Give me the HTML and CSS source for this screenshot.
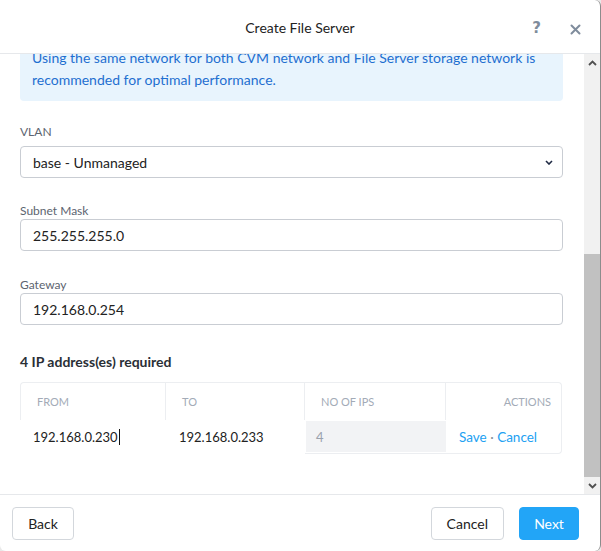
FILE: index.html
```html
<!DOCTYPE html>
<html>
<head>
<meta charset="utf-8">
<link rel="stylesheet" href="styles.css">
</head>
<body>
<div class="modal">
  <div class="header">
    <div class="title">Create File Server</div>
    <div class="hicons">
      <span class="help">?</span>
      <svg class="close" width="11" height="11" viewBox="0 0 11 11"><path d="M1.5 1.5 L9.5 9.5 M9.5 1.5 L1.5 9.5" stroke="#7f8c9c" stroke-width="2" stroke-linecap="round"/></svg>
    </div>
  </div>
  <div class="body">
    <div class="viewport">
      <div class="content">
        <div class="info">Using the same network for both CVM network and File Server storage network is recommended for optimal performance.</div>
        <div class="field first">
          <div class="label">VLAN</div>
          <div class="box select">
            <span>base - Unmanaged</span>
            <svg width="8" height="5" viewBox="0 0 8 5"><path d="M1 1 L4 4 L7 1" stroke="#1f2a44" stroke-width="1.6" fill="none"/></svg>
          </div>
        </div>
        <div class="field">
          <div class="label">Subnet Mask</div>
          <div class="box">255.255.255.0</div>
        </div>
        <div class="field last">
          <div class="label">Gateway</div>
          <div class="box">192.168.0.254</div>
        </div>
        <div class="req">4 IP address(es) required</div>
        <div class="table">
          <div class="th c1">FROM</div>
          <div class="th c2">TO</div>
          <div class="th c3">NO OF IPS</div>
          <div class="th c4">ACTIONS</div>
          <div class="td d1"><span>192.168.0.230</span><span class="caret"></span></div>
          <div class="td d2">192.168.0.233</div>
          <div class="td d3"><div class="num">4</div></div>
          <div class="td d4"><span class="actions"><span class="link">Save</span> · <span class="link">Cancel</span></span></div>
        </div>
      </div>
    </div>
    <div class="scrollbar">
      <div class="arrow"><svg width="9" height="6" viewBox="0 0 9 6"><path d="M1 5 L4.5 1.5 L8 5" stroke="#505050" stroke-width="1.8" fill="none"/></svg></div>
      <div class="track"><div class="thumb"></div></div>
      <div class="arrow"><svg width="9" height="6" viewBox="0 0 9 6"><path d="M1 1 L4.5 4.5 L8 1" stroke="#505050" stroke-width="1.8" fill="none"/></svg></div>
    </div>
  </div>
  <div class="footer">
    <div class="btn back">Back</div>
    <div class="right">
      <div class="btn">Cancel</div>
      <div class="btn primary">Next</div>
    </div>
  </div>
</div>
</body>
</html>
```

FILE: styles.css
```css
* { box-sizing: border-box; }
html, body { margin: 0; padding: 0; }
body {
  width: 601px;
  height: 551px;
  background: #e9e9e9;
  font-family: Lato, "Open Sans", sans-serif;
  color: #222;
  overflow: hidden;
}
.modal {
  width: 601px;
  height: 551px;
  background: #fff;
  border-right: 1px solid #8c8c8c;
  border-radius: 0 6px 6px 6px;
  display: flex;
  flex-direction: column;
  overflow: hidden;
}
.header {
  height: 54px;
  flex: none;
  border-bottom: 1px solid #e6e8eb;
  display: flex;
  align-items: center;
  justify-content: center;
  position: relative;
}
.title {
  font-size: 14px;
  color: #222;
  padding-top: 2px;
}
.hicons {
  position: absolute;
  right: 19px;
  top: 20px;
  display: flex;
  align-items: center;
  gap: 29px;
}
.help {
  font-family: "DejaVu Sans", sans-serif;
  font-size: 15px;
  font-weight: 700;
  color: #7f8c9c;
  line-height: 17px;
}
.close { display: block; margin-top: 1px; }
.body {
  flex: 1;
  display: flex;
  min-height: 0;
}
.viewport {
  flex: 1;
  overflow: hidden;
}
.content {
  padding: 0 21px 0 20px;
}
.info {
  margin-top: -19px;
  background: #e8f4fd;
  color: #1f6fd0;
  font-size: 14px;
  line-height: 22px;
  padding: 12px 20px 10px 12px;
  border-radius: 4px;
}
.field { margin-top: 25px; }
.field.first { margin-top: 23px; }
.field.last { margin-top: 26px; }
.label {
  font-size: 12px;
  line-height: 15px;
  color: #5c6470;
  margin-bottom: 1px;
}
.field.first .label { margin-bottom: 7px; }
.box {
  height: 32px;
  border: 1px solid #c9cdd3;
  border-radius: 4px;
  font-size: 14px;
  padding: 0 12px;
  display: flex;
  align-items: center;
}
.select {
  justify-content: space-between;
  padding-right: 9px;
}
.req {
  margin-top: 28px;
  font-size: 14px;
  font-weight: 700;
  line-height: 18px;
  color: #2a2f36;
}
.table {
  margin-top: 11px;
  display: grid;
  grid-template-columns: 146px 139px 141px 116px;
}
.th {
  height: 38px;
  font-size: 11px;
  color: #a3abb7;
  display: flex;
  align-items: center;
  padding: 0 16px;
  border-top: 1px solid #eceef1;
  border-right: 1px solid #eceef1;
}
.th.c1 { border-left: 1px solid #eceef1; border-top-left-radius: 4px; }
.th.c4 {
  justify-content: flex-end;
  padding-right: 10px;
  border-top-right-radius: 4px;
}
.td {
  height: 34px;
  font-size: 13px;
  display: flex;
  align-items: center;
}
.d1 { padding-left: 13px; }
.d2 { padding-left: 13px; }
.d3 {
  border-bottom: 1px solid #eceef1;
  padding: 1px 0 1px 1px;
  align-items: stretch;
}
.num {
  flex: 1;
  background: #f2f3f5;
  color: #9aa2ad;
  display: flex;
  align-items: center;
  padding-left: 10px;
}
.d4 {
  border-bottom: 1px solid #eceef1;
  border-right: 1px solid #eceef1;
  border-bottom-right-radius: 4px;
  padding-left: 13px;
}
.actions { color: #8a9099; white-space: pre; font-size: 13.5px; }
.link { color: #22a1f2; }
.caret {
  display: inline-block;
  width: 1px;
  height: 16px;
  background: #111;
  margin-left: 1px;
}
.scrollbar {
  width: 16px;
  flex: none;
  background: #f1f1f1;
  display: flex;
  flex-direction: column;
}
.arrow {
  height: 17px;
  display: flex;
  align-items: center;
  justify-content: center;
}
.track {
  flex: 1;
  display: flex;
  flex-direction: column;
  justify-content: flex-end;
}
.thumb {
  height: 223px;
  background: #c1c1c1;
}
.footer {
  height: 57px;
  flex: none;
  border-top: 1px solid #e6e8eb;
  display: flex;
  justify-content: space-between;
  padding: 12px 21px 0 12px;
}
.right { display: flex; gap: 15px; }
.btn {
  height: 33px;
  border: 1px solid #d3d7dc;
  border-radius: 4px;
  font-size: 14px;
  display: flex;
  align-items: center;
  justify-content: center;
  padding: 0 15px;
  color: #222;
}
.back { width: 62px; }
.btn.primary {
  background: #22a5f7;
  border-color: #22a5f7;
  color: #fff;
  width: 60px;
}
```
